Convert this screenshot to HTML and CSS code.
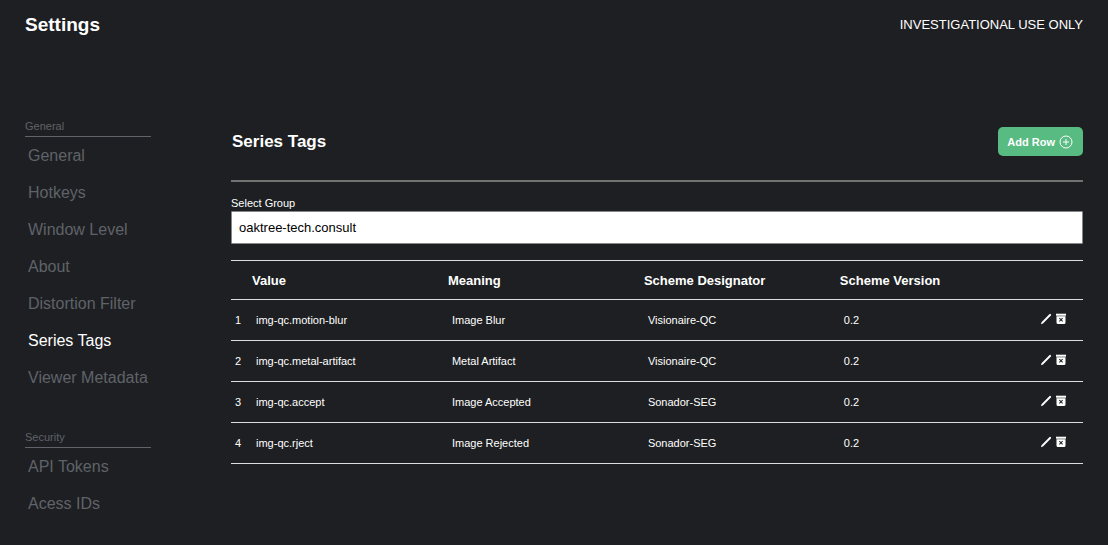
FILE: index.html
```
<!DOCTYPE html>
<html lang="en">
<head>
<meta charset="utf-8">
<meta name="viewport" content="width=device-width, initial-scale=1">
<title>Settings</title>
<link rel="stylesheet" href="styles.css">
</head>
<body>
<svg class="sprite" aria-hidden="true">
  <symbol id="icon-edit" viewBox="0 0 12 12">
    <path d="M1 11.200l.5-2L9.600 1.100q.5-.5 1 0l.3.3q.5.5 0 1L3 10.500z"/>
  </symbol>
  <symbol id="icon-delete" viewBox="0 0 12 12">
    <path d="M1 .700h10v2H1z"/>
    <path fill-rule="evenodd" d="M1.500 3.300h9v6.200q0 1.500-1.500 1.500H3q-1.500 0-1.500-1.500zM4.700 4.700l-.7.7L5.300 6.700 4 8l.7.7L6 7.400l1.300 1.300L8 8 6.700 6.700 8 5.400l-.7-.7L6 6z"/>
  </symbol>
</svg>
<header class="topbar">
  <h1 class="topbar-title">Settings</h1>
  <span class="topbar-notice">INVESTIGATIONAL USE ONLY</span>
</header>
<div class="layout">
  <nav class="sidebar" aria-label="Settings">
    <section class="nav-group">
      <h2 class="nav-heading">General</h2>
      <ul class="nav-list">
        <li><a class="nav-link" href="#general">General</a></li>
        <li><a class="nav-link" href="#hotkeys">Hotkeys</a></li>
        <li><a class="nav-link" href="#window-level">Window Level</a></li>
        <li><a class="nav-link" href="#about">About</a></li>
        <li><a class="nav-link" href="#distortion-filter">Distortion Filter</a></li>
        <li><a class="nav-link active" href="#series-tags" aria-current="page">Series Tags</a></li>
        <li><a class="nav-link" href="#viewer-metadata">Viewer Metadata</a></li>
      </ul>
    </section>
    <section class="nav-group">
      <h2 class="nav-heading">Security</h2>
      <ul class="nav-list">
        <li><a class="nav-link" href="#api-tokens">API Tokens</a></li>
        <li><a class="nav-link" href="#access-ids">Acess IDs</a></li>
      </ul>
    </section>
  </nav>
  <main class="content">
    <div class="content-head">
      <h2 class="content-title">Series Tags</h2>
      <button class="add-button" type="button">Add Row
        <svg class="add-icon" viewBox="0 0 14 14" aria-hidden="true"><circle cx="7" cy="7" r="6"/><path d="M7 4v6M4 7h6"/></svg>
      </button>
    </div>
    <label class="field-label" for="group">Select Group</label>
    <select class="group-select" id="group"><option>oaktree-tech.consult</option></select>
    <table class="tags">
      <thead>
        <tr><th class="col-index"></th><th class="col-data">Value</th><th class="col-data">Meaning</th><th class="col-data">Scheme Designator</th><th class="col-data">Scheme Version</th><th></th></tr>
      </thead>
      <tbody>
        <tr><td>1</td><td>img-qc.motion-blur</td><td>Image Blur</td><td>Visionaire-QC</td><td>0.2</td><td><div class="actions"><button class="icon-button" type="button" aria-label="Edit row 1"><svg class="icon"><use href="#icon-edit"/></svg></button><button class="icon-button" type="button" aria-label="Delete row 1"><svg class="icon"><use href="#icon-delete"/></svg></button></div></td></tr>
        <tr><td>2</td><td>img-qc.metal-artifact</td><td>Metal Artifact</td><td>Visionaire-QC</td><td>0.2</td><td><div class="actions"><button class="icon-button" type="button" aria-label="Edit row 2"><svg class="icon"><use href="#icon-edit"/></svg></button><button class="icon-button" type="button" aria-label="Delete row 2"><svg class="icon"><use href="#icon-delete"/></svg></button></div></td></tr>
        <tr><td>3</td><td>img-qc.accept</td><td>Image Accepted</td><td>Sonador-SEG</td><td>0.2</td><td><div class="actions"><button class="icon-button" type="button" aria-label="Edit row 3"><svg class="icon"><use href="#icon-edit"/></svg></button><button class="icon-button" type="button" aria-label="Delete row 3"><svg class="icon"><use href="#icon-delete"/></svg></button></div></td></tr>
        <tr><td>4</td><td>img-qc.rject</td><td>Image Rejected</td><td>Sonador-SEG</td><td>0.2</td><td><div class="actions"><button class="icon-button" type="button" aria-label="Edit row 4"><svg class="icon"><use href="#icon-edit"/></svg></button><button class="icon-button" type="button" aria-label="Delete row 4"><svg class="icon"><use href="#icon-delete"/></svg></button></div></td></tr>
      </tbody>
    </table>
  </main>
</div>
</body>
</html>
```
FILE: styles.css
```
* { box-sizing: border-box; }

body {
  margin: 0;
  background: #1e1f22;
  color: #fff;
  font-family: "Liberation Sans", Arial, sans-serif;
}

h1, h2, ul { margin: 0; padding: 0; }

.sprite { display: none; }

.topbar {
  display: flex;
  align-items: center;
  justify-content: space-between;
  padding: 13px 25px 12px;
}

.topbar-title { font-size: 19px; line-height: 24px; }
.topbar-notice { font-size: 13px; line-height: 24px; }

.layout {
  display: flex;
  gap: 80px;
  padding: 69px 25px 0;
}

.sidebar {
  display: flex;
  flex: 0 0 126px;
  flex-direction: column;
  gap: 33px;
}

.nav-heading {
  padding-bottom: 2px;
  border-bottom: 1px solid #606369;
  color: #5f6369;
  font-size: 11px;
  font-weight: 400;
  line-height: 16px;
}

.nav-list { list-style: none; }

.nav-link {
  display: block;
  padding-left: 3px;
  color: #5f6369;
  font-size: 16px;
  line-height: 37px;
  text-decoration: none;
  white-space: nowrap;
}

.nav-link.active { color: #fff; }

.content { flex: 1; min-width: 0; padding-top: 9px; }

.content-head {
  display: flex;
  align-items: center;
  justify-content: space-between;
  padding-bottom: 24px;
  border-bottom: 2px solid #70726f;
}

.content-title { padding-left: 1px; font-size: 17px; line-height: 24px; }

.add-button {
  display: flex;
  align-items: center;
  gap: 4px;
  height: 29px;
  padding: 0 10px 0 9px;
  border: 0;
  border-radius: 5px;
  background: #57bb82;
  color: #fff;
  font: bold 11px "Liberation Sans", Arial, sans-serif;
}

.add-icon {
  width: 14px;
  height: 14px;
  fill: none;
  stroke: #fff;
}

.field-label {
  display: block;
  padding-top: 13px;
  font-size: 11px;
  line-height: 16px;
}

.group-select {
  display: block;
  width: 100%;
  height: 33px;
  padding: 0 7px;
  border: 1px solid #85878c;
  border-radius: 1px;
  appearance: none;
  background: #fff;
  color: #000;
  font: 13px "Liberation Sans", Arial, sans-serif;
}

.tags {
  width: 100%;
  margin-top: 16px;
  border-collapse: collapse;
  table-layout: fixed;
  font-size: 11px;
}

.tags tr { border-bottom: 1px solid #dcdcdc; }
.tags thead tr { border-top: 1px solid #dcdcdc; }

.tags th {
  height: 39px;
  padding: 0;
  font-size: 13px;
  text-align: left;
}

.tags td { height: 41px; padding: 0 4px; }

.tags td:last-child { padding-right: 16px; }

.col-index { width: 21px; }
.col-data { width: 23%; }

.actions {
  display: flex;
  gap: 3px;
  justify-content: flex-end;
  padding-bottom: 2px;
}

.icon-button {
  padding: 0;
  border: 0;
  background: none;
  color: #fff;
}

.icon {
  display: block;
  width: 12px;
  height: 12px;
  fill: currentColor;
}
```
